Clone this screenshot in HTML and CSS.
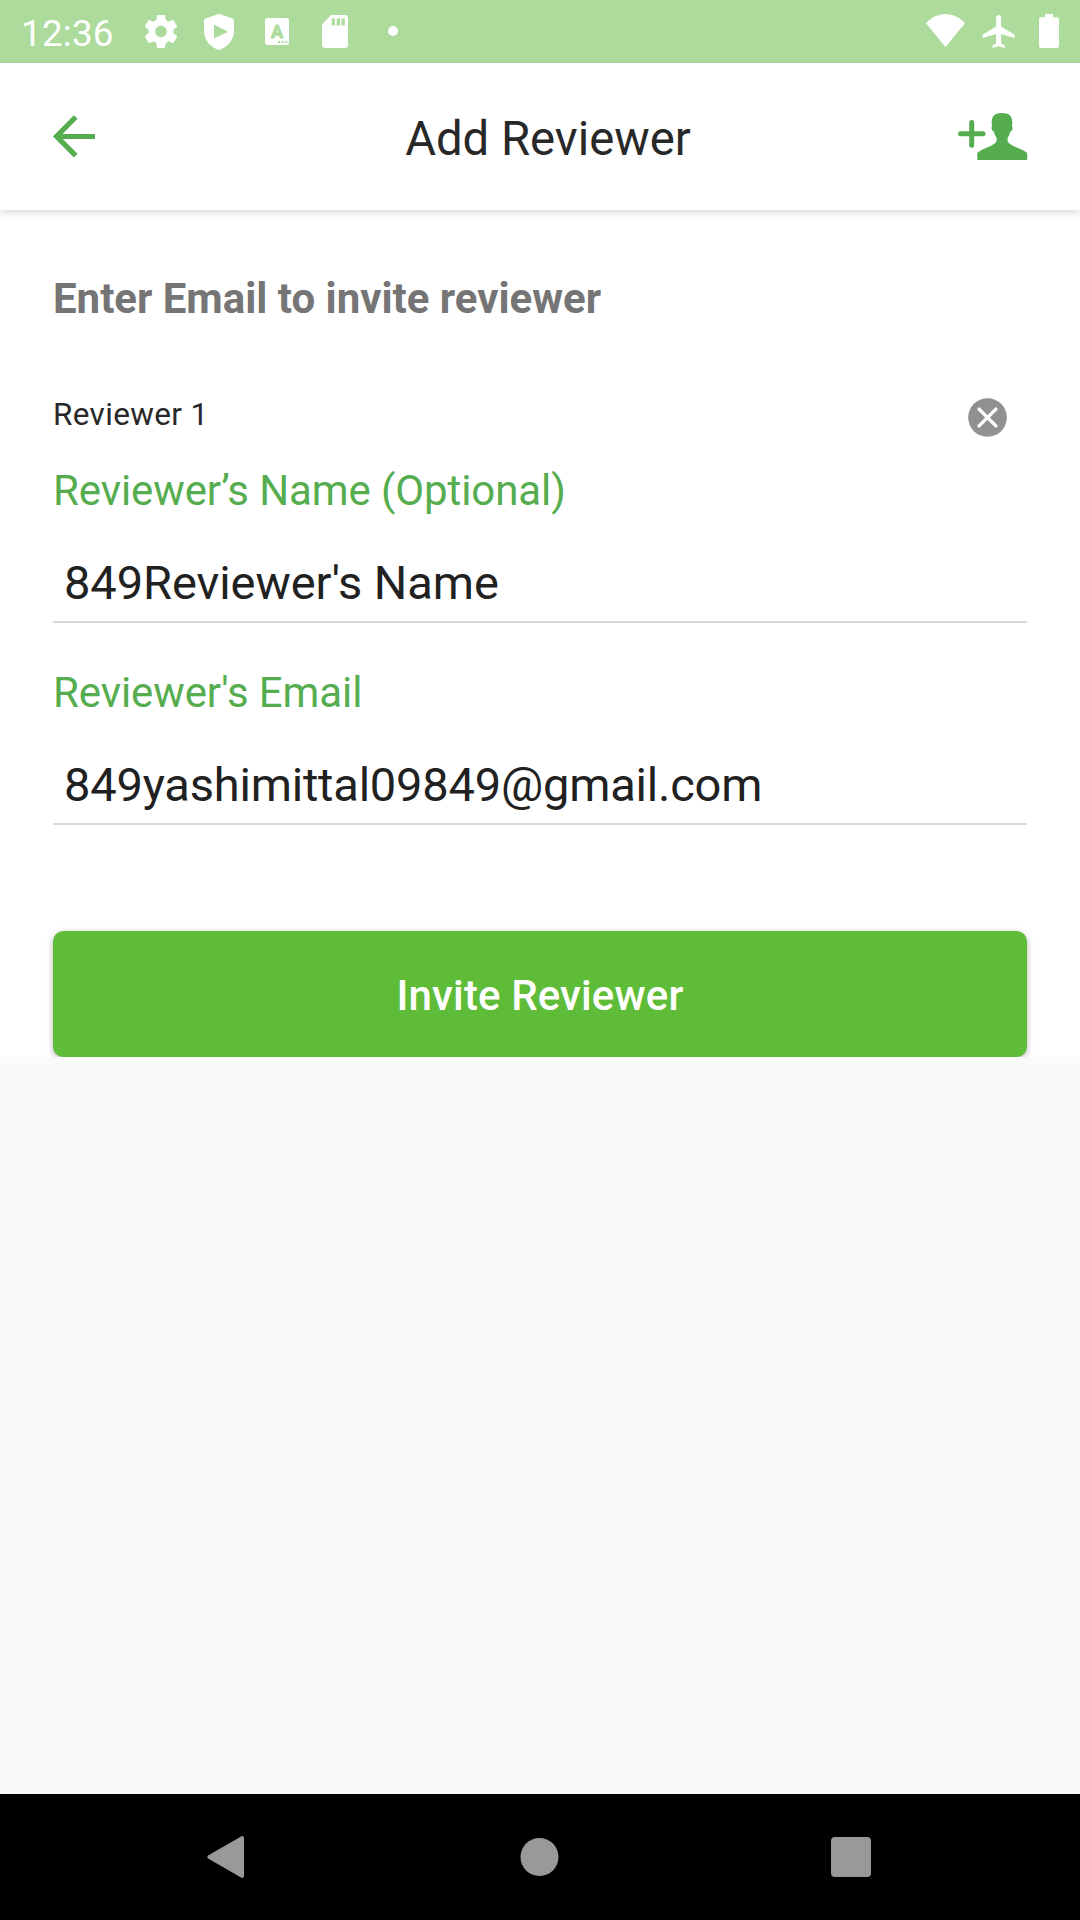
FILE: index.html
```html
<!DOCTYPE html>
<html lang="en">
<head>
<meta charset="utf-8">
<title>Add Reviewer</title>
<link rel="stylesheet" href="styles.css">
</head>
<body>
<div class="screen">
  <div class="status">
    <span class="clock">12:36</span>
    <div class="notifications">
      <svg width="58" height="63" viewBox="0 0 58 63"><path transform="translate(9.2 11.7) scale(1.65)" d="M19.43 12.98c.04-.32.07-.64.07-.98s-.03-.66-.07-.98l2.11-1.65c.19-.15.24-.42.12-.64l-2-3.46c-.12-.22-.39-.3-.61-.22l-2.49 1c-.52-.4-1.08-.73-1.69-.98l-.38-2.65C14.46 2.18 14.25 2 14 2h-4c-.25 0-.46.18-.49.42l-.38 2.65c-.61.25-1.17.59-1.69.98l-2.49-1c-.23-.09-.49 0-.61.22l-2 3.46c-.13.22-.07.49.12.64l2.11 1.65c-.04.32-.07.65-.07.98s.03.66.07.98l-2.11 1.65c-.19.15-.24.42-.12.64l2 3.46c.12.22.39.3.61.22l2.49-1c.52.4 1.08.73 1.69.98l.38 2.65c.03.24.24.42.49.42h4c.25 0 .46-.18.49-.42l.38-2.65c.61-.25 1.17-.59 1.69-.98l2.49 1c.23.09.49 0 .61-.22l2-3.46c.12-.22.07-.49-.12-.64l-2.11-1.65zM12 15.5c-1.93 0-3.500-1.57-3.500-3.500s1.570-3.500 3.500-3.500 3.500 1.570 3.500 3.500-1.570 3.500-3.500 3.500z"/></svg>
      <svg width="58" height="63" viewBox="0 0 58 63"><path fill-rule="evenodd" d="M29 13.700L42.500 18.600Q44 19.200 44 20.800V30C44 40 38 47 29 50C20 47 14 40 14 30V20.800Q14 19.200 15.500 18.600ZM24 25.700V37.500Q24 38.600 25 38.100L37 32.300Q37.900 31.700 37 31.200L25 25Q24 24.600 24 25.700Z"/></svg>
      <svg width="58" height="63" viewBox="0 0 58 63"><rect x="17" y="18" width="24" height="27" rx="2.500"/><text class="badge-letter" x="29" y="37.800" text-anchor="middle">A</text><path class="cut" d="M30 41h2v2h-2zM33.700 41h2v2h-2zM37.300 41h2v2h-2z"/></svg>
      <svg width="58" height="63" viewBox="0 0 58 63"><path fill-rule="evenodd" d="M25.500 15H39Q42 15 42 18V45Q42 48 39 48H19Q16 48 16 45V26Q16 24.500 17 23.500L24 16Q24.700 15 25.500 15ZM25.700 18.500V25.500H29V18.500ZM30.700 18.500V25.500H34V18.500ZM35.500 18.500V25.500H38.800V18.500Z"/></svg>
      <svg width="58" height="63" viewBox="0 0 58 63"><circle cx="29" cy="31" r="5"/></svg>
    </div>
    <div class="system">
      <svg width="52" height="63" viewBox="0 0 52 63"><path d="M26.500 47L7 23.300C12 17.500 19 14 26.500 14S41 17.500 46 23.300Z"/></svg>
      <svg width="52" height="63" viewBox="0 0 52 63"><path transform="translate(7.800 11.700) scale(1.650)" d="M21.700 16v-2l-8.200-5V3.500c0-.83-.67-1.500-1.500-1.500s-1.500.67-1.500 1.500V9l-8.200 5v2l8.200-2.500V19l-2.200 1.500V22l3.700-1 3.700 1v-1.500L13.500 19v-5.500l8.200 2.500z"/></svg>
      <svg width="52" height="63" viewBox="0 0 52 63"><path d="M22 14h8v3.300h4q2 0 2 2V46q0 2-2 2H18q-2 0-2-2V19.300q0-2 2-2h4z"/></svg>
    </div>
  </div>
  <header class="appbar">
    <svg class="back" width="85" height="50" viewBox="0 0 85 50"><path d="M42 24.500H4M22.700 5L3.500 24.300L22.700 43.700"/></svg>
    <h1>Add Reviewer</h1>
    <svg class="add" width="70" height="50" viewBox="0 0 70 50"><path class="plus" d="M2.500 21.800H25M13.700 10.500V33.300"/><path d="M19.300 48V41.200C21.500 38.300 27 36.700 31.500 34.500C36 32.400 39 30.500 38.700 27C38.500 24.500 36.600 24 36 19.700C34 19.300 32.700 15.500 34 14.300C33.300 7.500 33.500 1 44 1S54.800 7.500 54 14.300C55.500 15.500 54.200 19.300 52.200 19.700C51.500 24 49.700 24.500 49.500 27C49.200 30.500 52 32.400 56.500 34.500C61 36.700 67 38.300 69.200 41.200V48Z"/></svg>
  </header>
  <main class="form">
    <h2>Enter Email to invite reviewer</h2>
    <div class="reviewer">
      <span>Reviewer 1</span>
      <svg width="40" height="40" viewBox="0 0 40 40"><circle cx="19.500" cy="19.500" r="19.300"/><path d="M11.100 11.100L27.900 27.900M27.900 11.100L11.100 27.900"/></svg>
    </div>
    <div class="field">
      <div class="label">Reviewer’s Name (Optional)</div>
      <div class="value">849Reviewer's Name</div>
    </div>
    <div class="field">
      <div class="label">Reviewer's Email</div>
      <div class="value email">849yashimittal09849@gmail.com</div>
    </div>
    <button class="invite">Invite Reviewer</button>
  </main>
  <nav class="navbar">
    <svg width="40" height="44" viewBox="0 0 40 44"><path d="M1.500 20.200L34 1.400Q37 .2 37 3.500V40.500Q37 43.800 34 42.600L1.500 23.800Q-1 22 1.500 20.200Z"/></svg>
    <svg width="40" height="40" viewBox="0 0 40 40"><circle cx="20.500" cy="20" r="19"/></svg>
    <svg width="40" height="40" viewBox="0 0 40 40"><rect width="40" height="40" rx="4"/></svg>
  </nav>
</div>
</body>
</html>
```

FILE: styles.css
```css
* { box-sizing: border-box; }

body {
  margin: 0;
  font-family: Roboto, "Liberation Sans", sans-serif;
}

svg { display: block; flex: none; }

.screen {
  display: flex;
  flex-direction: column;
  width: 1080px;
  height: 1920px;
  background: #fafafa;
}

.status {
  display: flex;
  height: 63px;
  padding: 0 5px 0 21px;
  background: #acdb9b;
  color: #fff;
  fill: #fff;
}

.clock {
  width: 111px;
  font-size: 36.75px;
  letter-spacing: 0.25px;
  line-height: 67px;
}

.notifications, .system { display: flex; }
.system { margin-left: auto; }

.badge-letter {
  fill: #acdb9b;
  stroke: #acdb9b;
  stroke-width: 0.8px;
  font-size: 18px;
  font-weight: 700;
}

.cut { fill: #acdb9b; }

.appbar {
  display: flex;
  align-items: center;
  justify-content: space-between;
  position: relative;
  z-index: 1;
  height: 147px;
  padding: 0 52px 0 53px;
  background: #fff;
  box-shadow: 0 3px 8px rgba(0, 0, 0, 0.14);
}

.back {
  fill: none;
  stroke: #55ad4f;
  stroke-width: 5.2px;
}

.add { fill: #55ad4f; }

.plus {
  stroke: #55ad4f;
  stroke-width: 5px;
  stroke-linecap: round;
}

h1, h2 { margin: 0; }

h1 {
  padding-top: 4px;
  color: #282828;
  font-size: 47.25px;
  font-weight: 400;
  line-height: 56px;
}

.form {
  height: 847px;
  padding: 64px 53px 0;
  overflow: hidden;
  background: #fff;
}

h2 {
  color: #757575;
  font-size: 42px;
  font-weight: 700;
  letter-spacing: -0.02px;
  line-height: 50px;
}

.reviewer {
  display: flex;
  align-items: flex-start;
  justify-content: space-between;
  height: 70px;
  margin-top: 72px;
  padding-right: 19px;
  color: #282828;
  font-size: 31.5px;
  letter-spacing: 0.34px;
  line-height: 38px;
}

.reviewer svg {
  margin-top: 2px;
  fill: #919191;
  stroke: #fff;
  stroke-width: 3.4px;
  stroke-linecap: round;
}

.reviewer circle { stroke: none; }

.field { border-bottom: 2px solid #d8d8d8; }
.field + .field { margin-top: 45px; }

.label {
  color: #55ad4f;
  font-size: 42px;
  letter-spacing: -0.1px;
  line-height: 50px;
}

.value {
  padding: 39px 0 10px 11px;
  color: #212121;
  font-size: 47px;
  letter-spacing: -0.07px;
  line-height: 56px;
}

.email { letter-spacing: -0.2px; }

.invite {
  display: block;
  width: 100%;
  height: 126px;
  margin-top: 106px;
  padding: 3px 0 0;
  border: 0;
  border-radius: 10.5px;
  background: #5fbc38;
  box-shadow: 0 2px 6px rgba(0, 0, 0, 0.3);
  color: #fff;
  font: 500 42px/50px Roboto, "Liberation Sans", sans-serif;
  letter-spacing: 0.12px;
}

.navbar {
  display: flex;
  align-items: center;
  justify-content: space-between;
  height: 126px;
  margin-top: auto;
  padding: 0 209px 0 207px;
  background: #000;
  fill: #999;
}
```
